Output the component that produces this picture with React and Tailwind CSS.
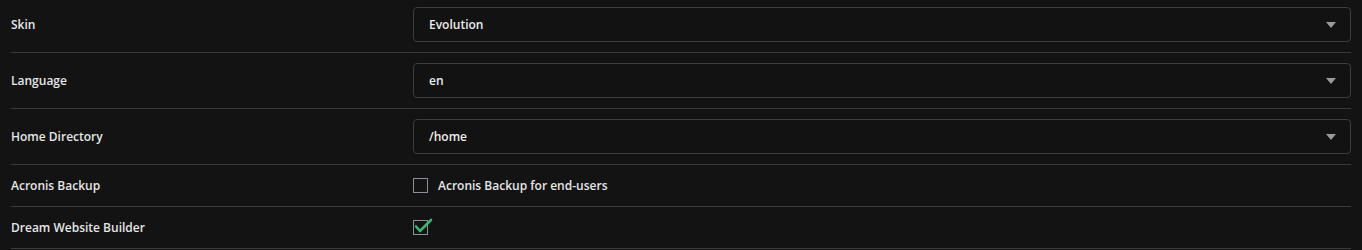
const selects = [
  { label: 'Skin', value: 'Evolution' },
  { label: 'Language', value: 'en' },
  { label: 'Home Directory', value: '/home' },
];

function SelectRow({ label, value, first }) {
  return (
    <div
      className={`flex items-center border-b border-[#3a3a3a] pb-[10px] ${first ? 'pt-[7px]' : 'pt-[10px]'}`}
    >
      <div className="w-[402px] shrink-0 text-[12px] font-semibold text-[#e6e6e6]">{label}</div>
      <div className="flex h-[35px] flex-1 items-center justify-between rounded-[4px] border border-[#3d3d3d] bg-[#121212] pl-[15px] pr-[14px]">
        <span className="text-[12px] font-semibold text-[#ececec]">{value}</span>
        <span className="h-0 w-0 border-x-[5px] border-t-[6px] border-x-transparent border-t-[#9a9a9a]" />
      </div>
    </div>
  );
}

function CheckRow({ label, checked, text }) {
  return (
    <div className="flex h-[42px] items-center border-b border-[#3a3a3a]">
      <div className="w-[402px] shrink-0 text-[12px] font-semibold text-[#e6e6e6]">{label}</div>
      <div className="flex items-center gap-[10px]">
        <span className="relative block h-[15px] w-[15px] border border-[#8a909a]">
          {checked && (
            <svg
              className="absolute -left-[1px] -top-[3px]"
              width="20"
              height="16"
              viewBox="0 0 20 16"
              fill="none"
            >
              <polyline
                points="3,8.5 7,13 18,2"
                stroke="#3cb46e"
                strokeWidth="2.6"
                strokeLinecap="round"
                strokeLinejoin="round"
              />
            </svg>
          )}
        </span>
        {text && <span className="text-[12px] font-semibold text-[#e6e6e6]">{text}</span>}
      </div>
    </div>
  );
}

export default function App() {
  return (
    <div
      className="min-h-[250px] bg-[#131313] pl-[11px] pr-[11px]"
      style={{ fontFamily: '"Open Sans", "Liberation Sans", sans-serif' }}
    >
      {selects.map((s, i) => (
        <SelectRow key={s.label} label={s.label} value={s.value} first={i === 0} />
      ))}
      <CheckRow label="Acronis Backup" text="Acronis Backup for end-users" />
      <CheckRow label="Dream Website Builder" checked />
    </div>
  );
}
